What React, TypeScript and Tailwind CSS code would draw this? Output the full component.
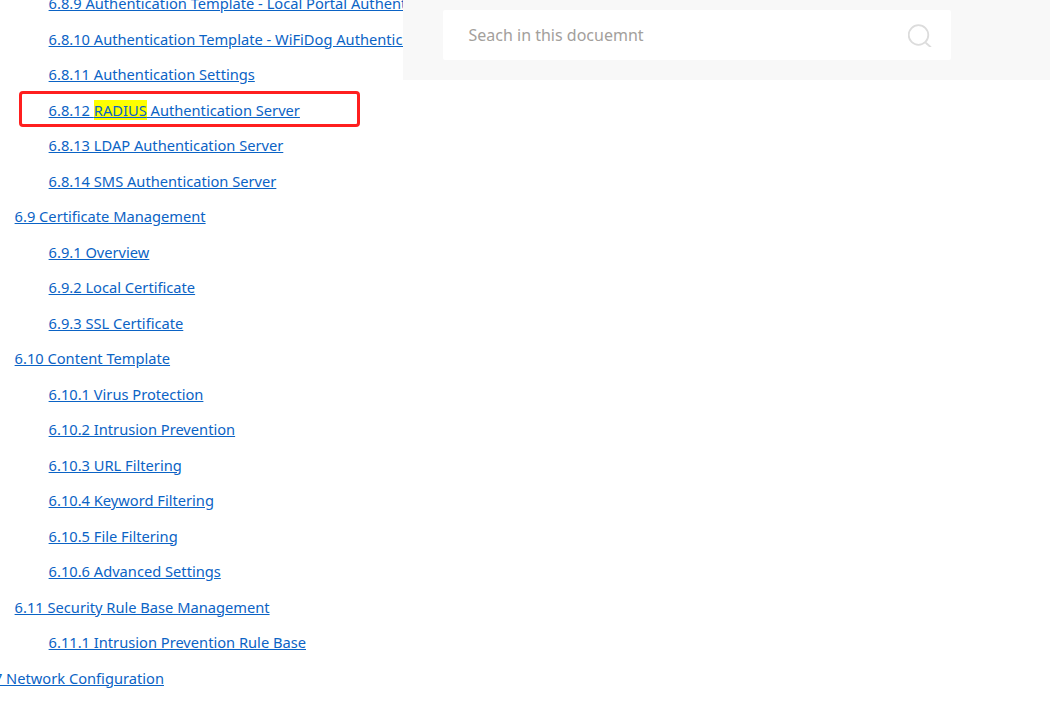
interface TocRow {
  label: string;
  level: 0 | 1 | 2;
}

const rows: TocRow[] = [
  { label: '6.8.9 Authentication Template - Local Portal Authentication', level: 2 },
  { label: '6.8.10 Authentication Template - WiFiDog Authentication', level: 2 },
  { label: '6.8.11 Authentication Settings', level: 2 },
  { label: '6.8.12 RADIUS Authentication Server', level: 2 },
  { label: '6.8.13 LDAP Authentication Server', level: 2 },
  { label: '6.8.14 SMS Authentication Server', level: 2 },
  { label: '6.9 Certificate Management', level: 1 },
  { label: '6.9.1 Overview', level: 2 },
  { label: '6.9.2 Local Certificate', level: 2 },
  { label: '6.9.3 SSL Certificate', level: 2 },
  { label: '6.10 Content Template', level: 1 },
  { label: '6.10.1 Virus Protection', level: 2 },
  { label: '6.10.2 Intrusion Prevention', level: 2 },
  { label: '6.10.3 URL Filtering', level: 2 },
  { label: '6.10.4 Keyword Filtering', level: 2 },
  { label: '6.10.5 File Filtering', level: 2 },
  { label: '6.10.6 Advanced Settings', level: 2 },
  { label: '6.11 Security Rule Base Management', level: 1 },
  { label: '6.11.1 Intrusion Prevention Rule Base', level: 2 },
  { label: '6.7 Network Configuration', level: 0 },
];

function RowLabel({ label }: { label: string }) {
  if (!label.includes('RADIUS')) return <>{label}</>;
  const [before, after] = label.split('RADIUS');
  return (
    <>
      {before}
      <span className="bg-[#ffff00]">RADIUS</span>
      {after}
    </>
  );
}

export default function App() {
  return (
    <div className="flex h-[702px] w-[1050px] overflow-hidden bg-white font-['Noto_Sans',sans-serif]">
      <div className="w-[403px] shrink-0 overflow-hidden">
        <ul className="-mt-[14.5px] flex flex-col">
          {rows.map((row) => (
            <li
              key={row.label}
              className={
                'flex h-[35.5px] items-center whitespace-nowrap text-[14.67px] text-[#0b63c5] ' +
                (row.level === 2 ? 'pl-[48.6px]' : row.level === 1 ? 'pl-[14.6px]' : '-ml-[18.4px]')
              }
            >
              <a href="#" className="underline">
                <RowLabel label={row.label} />
              </a>
            </li>
          ))}
        </ul>
      </div>
      <div className="flex-1">
        <div className="h-20 bg-[#f8f8f8] pl-10 pr-[99px] pt-2.5">
          <div className="flex h-[50px] items-center justify-between rounded-[2px] bg-white pl-[25.5px] pr-[19px]">
            <span className="text-[16px] text-[#a3a09c]">Seach in this docuemnt</span>
            <svg viewBox="0 0 24 24" className="h-6 w-6 text-[#dcdcdc]" fill="none" stroke="currentColor" strokeWidth={1.8}>
              <circle cx="10.5" cy="12" r="9.8" />
              <path d="M18 20l4.5 4" strokeLinecap="round" />
            </svg>
          </div>
        </div>
      </div>
      <div className="absolute left-[18.5px] top-[90.5px] h-[36px] w-[341px] rounded-[4px] border-[3px] border-[#ff1f1f]" />
    </div>
  );
}
